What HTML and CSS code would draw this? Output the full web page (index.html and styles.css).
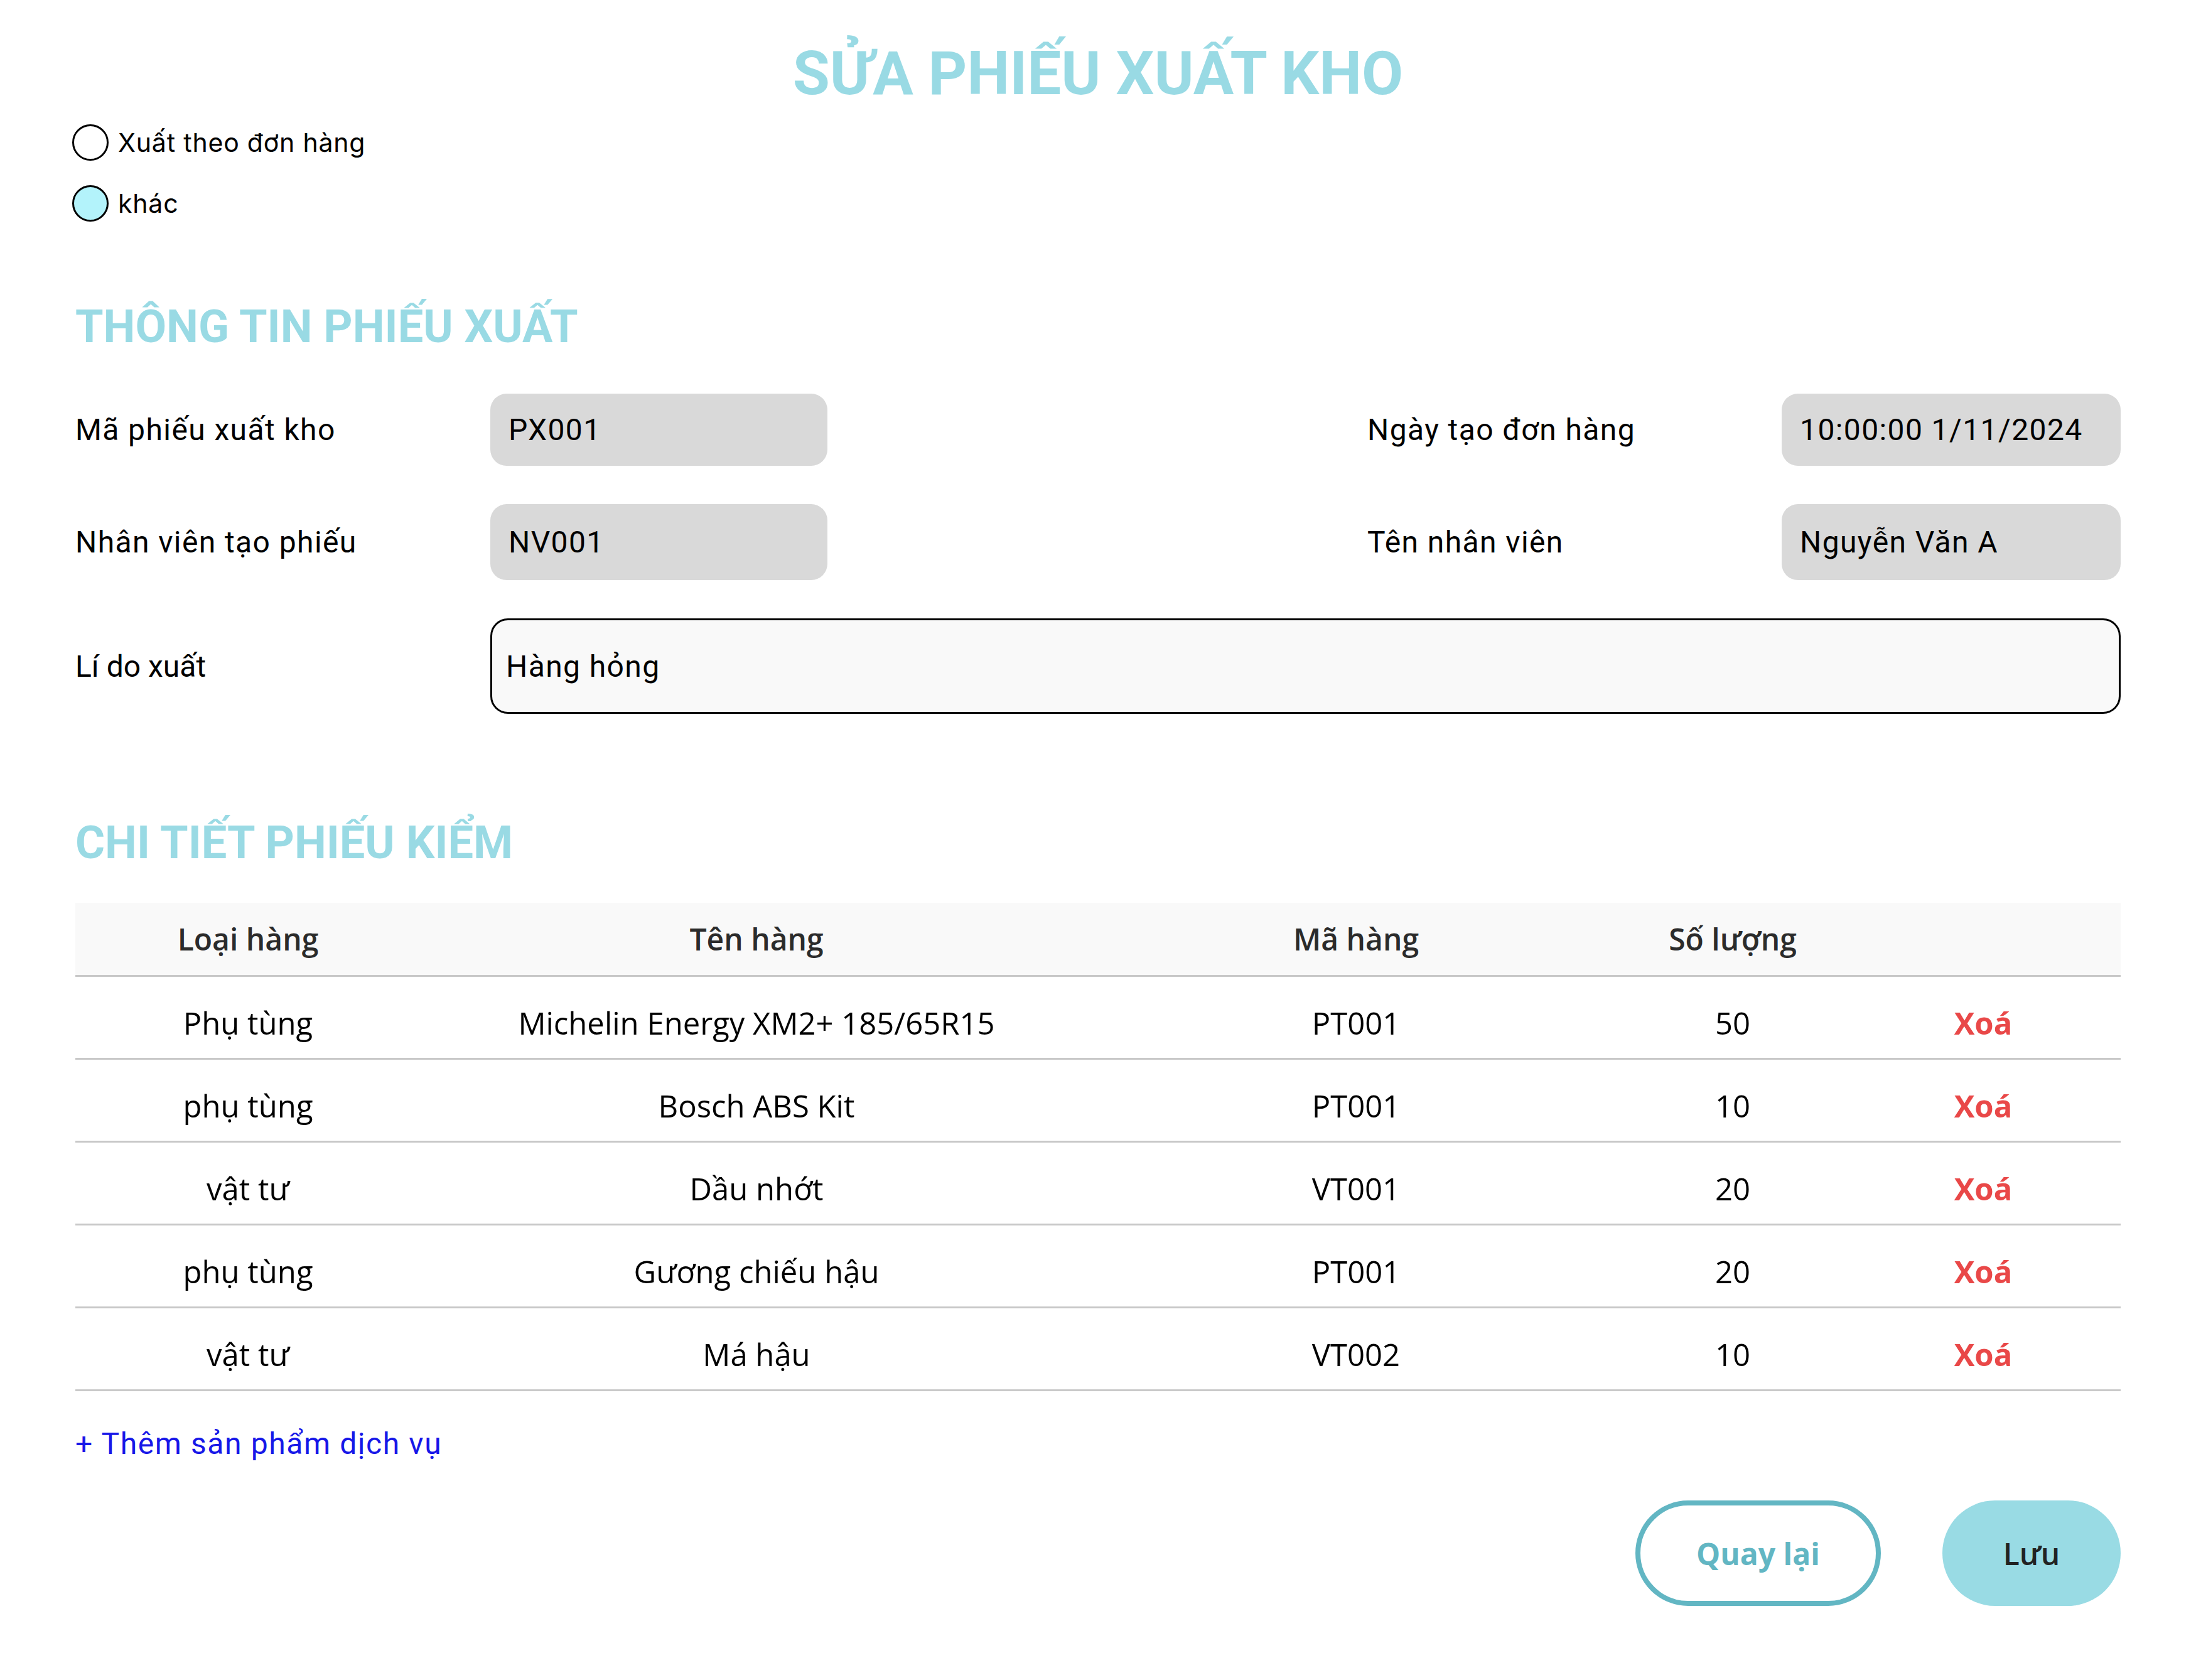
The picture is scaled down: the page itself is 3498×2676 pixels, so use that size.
FILE: index.html
```html
<!DOCTYPE html>
<html lang="vi">
<head>
<meta charset="utf-8">
<title>Sửa phiếu xuất kho</title>
<link rel="stylesheet" href="styles.css">
</head>
<body>
<div class="page">
  <h1 class="title">SỬA PHIẾU XUẤT KHO</h1>

  <div class="radios">
    <label class="radio"><span class="dot"></span><span class="radio-text">Xuất theo đơn hàng</span></label>
    <label class="radio"><span class="dot dot-on"></span><span class="radio-text">khác</span></label>
  </div>

  <h2 class="section section-info">THÔNG TIN PHIẾU XUẤT</h2>

  <div class="form">
    <div class="label">Mã phiếu xuất kho</div>
    <div class="field">PX001</div>
    <div class="spacer"></div>
    <div class="label">Ngày tạo đơn hàng</div>
    <div class="field">10:00:00 1/11/2024</div>

    <div class="label">Nhân viên tạo phiếu</div>
    <div class="field field-tall">NV001</div>
    <div class="spacer"></div>
    <div class="label">Tên nhân viên</div>
    <div class="field field-tall">Nguyễn Văn A</div>

    <div class="label label-tight">Lí do xuất</div>
    <div class="field field-reason">Hàng hỏng</div>
  </div>

  <h2 class="section section-detail">CHI TIẾT PHIẾU KIỂM</h2>

  <div class="table">
    <div class="row head">
      <div class="cell">Loại hàng</div>
      <div class="cell">Tên hàng</div>
      <div class="cell">Mã hàng</div>
      <div class="cell">Số lượng</div>
      <div class="cell"></div>
    </div>
    <div class="row">
      <div class="cell">Phụ tùng</div>
      <div class="cell">Michelin Energy XM2+ 185/65R15</div>
      <div class="cell">PT001</div>
      <div class="cell">50</div>
      <div class="cell del">Xoá</div>
    </div>
    <div class="row">
      <div class="cell">phụ tùng</div>
      <div class="cell">Bosch ABS Kit</div>
      <div class="cell">PT001</div>
      <div class="cell">10</div>
      <div class="cell del">Xoá</div>
    </div>
    <div class="row">
      <div class="cell">vật tư</div>
      <div class="cell">Dầu nhớt</div>
      <div class="cell">VT001</div>
      <div class="cell">20</div>
      <div class="cell del">Xoá</div>
    </div>
    <div class="row">
      <div class="cell">phụ tùng</div>
      <div class="cell">Gương chiếu hậu</div>
      <div class="cell">PT001</div>
      <div class="cell">20</div>
      <div class="cell del">Xoá</div>
    </div>
    <div class="row">
      <div class="cell">vật tư</div>
      <div class="cell">Má hậu</div>
      <div class="cell">VT002</div>
      <div class="cell">10</div>
      <div class="cell del">Xoá</div>
    </div>
  </div>

  <div class="add">+ Thêm sản phẩm dịch vụ</div>

  <div class="actions">
    <button class="btn btn-back">Quay lại</button>
    <button class="btn btn-save">Lưu</button>
  </div>
</div>
</body>
</html>
```

FILE: styles.css
```css
* { box-sizing: border-box; }

html, body {
  margin: 0;
  padding: 0;
  background: #ffffff;
}

body {
  font-family: Roboto, "Liberation Sans", sans-serif;
  color: #000;
}

.page {
  padding: 0 120px;
}

.title {
  margin: 61px 0 0;
  font-family: Roboto, sans-serif;
  font-weight: 700;
  font-size: 96px;
  line-height: 112px;
  text-align: center;
  color: #99dae4;
}

.radios {
  margin-top: 25px;
  margin-left: -5px;
  display: flex;
  flex-direction: column;
  gap: 39px;
}

.radio {
  display: flex;
  align-items: center;
  gap: 15px;
  height: 58px;
}

.dot {
  width: 58px;
  height: 58px;
  border-radius: 50%;
  border: 3px solid #000;
  background: #fff;
  flex: none;
}

.dot-on {
  background: #b3f3fb;
}

.radio-text {
  font-family: Inter, sans-serif;
  font-size: 41px;
  letter-spacing: 0.8px;
  color: #000;
}

.section {
  margin: 0;
  font-family: Roboto, sans-serif;
  font-weight: 700;
  font-size: 72px;
  line-height: 84px;
  color: #99dae4;
}

.section-info {
  margin-top: 126px;
}

.section-detail {
  margin-top: 164px;
}

.form {
  margin-top: 64px;
  display: grid;
  grid-template-columns: 661px 537px 1fr 660px 540px;
  grid-auto-rows: auto;
  row-gap: 61px;
  align-items: center;
}

.label {
  font-size: 48px;
  letter-spacing: 1.4px;
  color: #000;
}

.label-tight {
  letter-spacing: 0;
}

.field {
  height: 115px;
  background: #d9d9d9;
  border-radius: 26px;
  padding-left: 29px;
  display: flex;
  align-items: center;
  font-size: 48px;
  letter-spacing: 1.4px;
  color: #000;
}

.field-tall {
  height: 121px;
}

.field-reason {
  grid-column: 2 / 6;
  height: 152px;
  background: #f9f9f9;
  border: 3px solid #000;
  border-radius: 28px;
  padding-left: 22px;
}

.table {
  margin-top: 53px;
  font-family: "Open Sans", sans-serif;
}

.row {
  display: grid;
  grid-template-columns: 550px 1070px 840px 360px 1fr;
  height: 132px;
  padding-top: 17px;
  border-bottom: 3px solid #c8c8c8;
  align-items: center;
  font-size: 49px;
  color: #000;
}

.row.head {
  height: 118px;
  padding-top: 0;
  background: #f9f9f9;
  font-size: 48px;
  font-weight: 600;
  color: #2b2b2b;
}

.cell {
  text-align: center;
}

.del {
  color: #e94848;
  font-weight: 700;
}

.add {
  margin-top: 55px;
  font-size: 48px;
  letter-spacing: 1.6px;
  color: #1717e8;
}

.actions {
  margin-top: 62px;
  display: flex;
  justify-content: flex-end;
  gap: 98px;
}

.btn {
  height: 168px;
  border-radius: 84px;
  font-family: "Open Sans", sans-serif;
  font-size: 48px;
  cursor: pointer;
}

.btn-back {
  width: 391px;
  background: #fff;
  border: 8px solid #62b6c3;
  color: #62b6c3;
  font-weight: 700;
}

.btn-save {
  width: 284px;
  background: #99dbe4;
  border: none;
  color: #222;
  font-weight: 600;
}
```
